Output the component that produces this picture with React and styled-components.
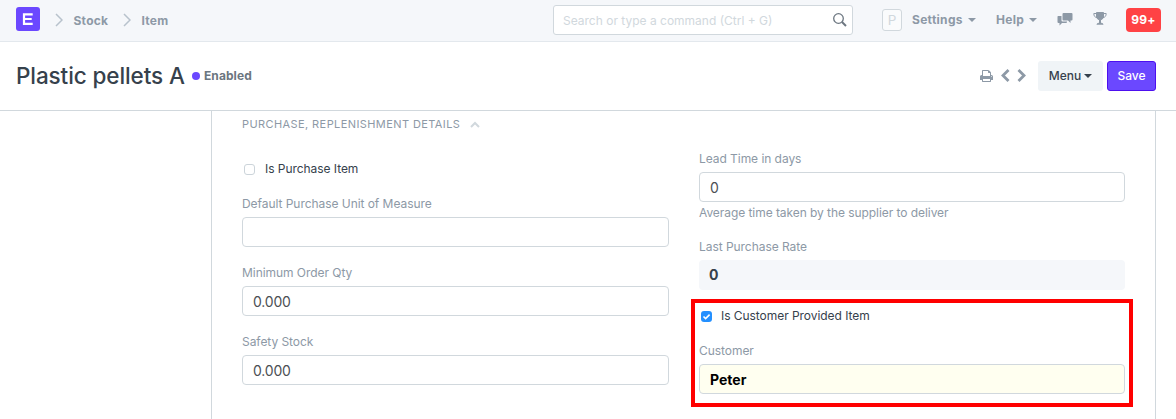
import React from 'react';
import styled, { createGlobalStyle, css } from 'styled-components';

const Global = createGlobalStyle`
  * { box-sizing: border-box; }
  body { margin: 0; background: #fff; color: #36414c; font: 12px/17px Inter, "Open Sans", sans-serif; overflow: hidden; }
  input, button { font-family: inherit; margin: 0; }
  svg { display: block; flex: none; }
`;

const Navbar = styled.nav`
  height: 42px; display: flex; align-items: center; padding: 0 15px 1px 16px;
  background: #f5f7fa; border-bottom: 1px solid #e3e8ed; color: #8d99a6; font-weight: 700;
`;
const Logo = styled.div`
  width: 24px; height: 24px; border-radius: 3px; background: #6b48ff; margin-top: -3px;
`;
const Crumb = styled.div`
  display: flex; align-items: center; gap: 10px; margin-left: 15px;
`;
const CrumbText = styled.span`width: ${p => p.$w}px; padding-left: .5px; letter-spacing: .25px; white-space: nowrap;`;
const Search = styled.label`
  width: 300px; height: 30px; margin: -1px 29px 0 auto; padding: 0 5px 0 9px;
  display: flex; align-items: center; background: #fff; border: 1px solid #d1d8dd; border-radius: 3px;
`;
const SearchInput = styled.input`
  flex: 1; border: 0; outline: 0; padding: 1px 0 0; font-size: 12px; background: transparent;
  &::placeholder { color: #d1d8dd; opacity: 1; }
`;
const NavRight = styled.div`display: flex; align-items: center; width: 279px; margin-top: -1px;`;
const Avatar = styled.div`
  width: 20px; height: 22px; border: 1px solid #d1d8dd; border-radius: 3px; color: #d1d8dd;
  font-size: 13.5px; font-weight: 400; line-height: 21px; text-align: center; background: #fafbfc;
`;
const NavLink = styled.div`
  display: flex; align-items: center; justify-content: space-between; letter-spacing: .3px;
  width: ${p => p.$w}px; margin-left: ${p => p.$left}px; white-space: nowrap;
`;
const Caret = styled.i`
  border: 4px solid transparent; border-top-color: currentColor; border-bottom: 0;
`;
const NavIcon = styled.div`margin-left: ${p => p.$left}px; margin-top: -2px;`;
const Badge = styled.div`
  width: 35px; height: 24px; margin-left: auto; border-radius: 4px; background: #ff4245; color: #fff;
  font-weight: 700; line-height: 24px; letter-spacing: .3px; text-align: center;
`;

const PageHead = styled.header`
  height: 69px; display: flex; align-items: center; padding: 0 20px 0 16px; border-bottom: 1px solid #d1d8dd;
`;
const Title = styled.h1`
  margin: 0; font-size: 22.5px; line-height: 30px; font-weight: 500; letter-spacing: -.1px;
  width: 176px; white-space: nowrap;
`;
const Status = styled.div`
  display: flex; align-items: center; gap: 4px; color: #6c7680; font-weight: 700; letter-spacing: .08px;
  margin-top: -1px;
  &::before { content: ''; width: 8px; height: 8px; margin-top: 1px; border-radius: 50%; background: #6b48ff; }
`;
const Tools = styled.div`display: flex; align-items: center; margin-left: auto; color: #8d99a6;`;
const PrevNext = styled.div`display: flex; gap: 7px; margin: -1px 12px 0 8px;`;
const Button = styled.button`
  height: 30px; display: flex; align-items: center; justify-content: center; gap: 3px; padding: 0 0 1px;
  width: ${p => (p.$primary ? 49 : 65)}px; border-radius: 3px; font-size: 12px; font-weight: 500;
  ${p => p.$primary
    ? css`background: #6b48ff; border: 1px solid #4d0fef; color: #fff; margin-left: 4px;`
    : css`background: #f0f4f7; border: 0; color: #36414c;`}
`;

const FormPanel = styled.main`
  height: 308px; margin: 0 20px 0 211px; padding: 5px 30px 0;
  border: solid #d1d8dd; border-width: 0 1px;
`;
const SectionHead = styled.h2`
  margin: 0; display: flex; align-items: center; gap: 10px; color: #8d99a6;
  font-size: 11px; line-height: 17px; font-weight: 400; letter-spacing: .41px; text-transform: uppercase;
`;
const Columns = styled.div`display: grid; grid-template-columns: 427px 426px; column-gap: 30px;`;
const Column = styled.div`display: flex; flex-direction: column; padding-top: ${p => p.$top}px;`;
const Field = styled.div`display: flex; flex-direction: column; margin-bottom: ${p => p.$gap ?? 17}px;`;
const Label = styled.label`line-height: 17px; margin-bottom: 5px; color: #8d99a6; letter-spacing: -.05px;`;
const Input = styled.input`
  width: 100%; height: 30px; padding: 1px 10px 0; border: 1px solid #d1d8dd; border-radius: 4px; outline: 0;
  font-size: 14px; letter-spacing: ${p => (p.$link ? 0 : -.2)}px; color: ${p => (p.$link ? '#000' : '#4c5054')};
  background: ${p => (p.$link ? '#fffff0' : '#fff')}; font-weight: ${p => (p.$link ? 700 : 400)};
`;
const ReadOnly = styled.div`
  height: 30px; padding: 0 10px; border-radius: 4px; background: #f5f7fa;
  font-size: 14px; line-height: 30px; font-weight: 700;
`;
const Help = styled.p`margin: 2px 0 0; line-height: 17px; color: #8d99a6; letter-spacing: -.06px;`;
const CheckRow = styled.label`
  display: flex; align-items: center; height: 17px; gap: ${p => p.$space}px; margin-bottom: 17px;
  padding-left: 2px; letter-spacing: -.05px;
`;
const CheckText = styled.span`padding-bottom: 2px;`;
const Box = styled.span`
  width: 11px; height: 11px; border-radius: 3px; flex: none;
  ${p => p.$checked ? css`background: #2490ff;` : css`border: 1px solid #ccd4da;`}
`;
const Highlight = styled.section`
  height: 108px; margin: -8px -8px 0 -8px; padding: 5px 4px 0 4px; border: 4px solid #f00;
`;

const Chevron = ({ w, h, d, color = 'currentColor', sw = 2 }) => (
  <svg width={w} height={h} viewBox={`0 0 ${w} ${h}`} fill="none" stroke={color} strokeWidth={sw}><path d={d} /></svg>
);

function TextField({ label, value, help, gap, link }) {
  return (
    <Field $gap={gap}>
      <Label>{label}</Label>
      <Input defaultValue={value} $link={link} />
      {help && <Help>{help}</Help>}
    </Field>
  );
}

export default function App() {
  return (
    <>
      <Global />
      <Navbar>
        <Logo>
          <svg width="24" height="24" viewBox="0 0 24 24" fill="none" stroke="#fff" strokeWidth="2.200"><path d="M16.700 7.300H8V16.800H16.700M8 12H15.700" /></svg>
        </Logo>
        <Crumb>
          <Chevron w={8} h={14} d="M1 1L7 7L1 13" color="#b8c2cc" sw={1.5} />
          <CrumbText $w={35}>Stock</CrumbText>
        </Crumb>
        <Crumb>
          <Chevron w={8} h={14} d="M1 1L7 7L1 13" color="#b8c2cc" sw={1.5} />
          <CrumbText $w={28}>Item</CrumbText>
        </Crumb>
        <Search>
          <SearchInput placeholder="Search or type a command (Ctrl + G)" />
          <svg width="15" height="15" viewBox="0 0 15 15" fill="none" stroke="#6c7680"><circle cx="6.500" cy="6.500" r="4.800" strokeWidth="1.300" /><path d="M10 10L14 14" strokeWidth="2" /></svg>
        </Search>
        <NavRight>
          <Avatar>P</Avatar>
          <NavLink $w={64} $left={10}>Settings<Caret /></NavLink>
          <NavLink $w={41} $left={20}>Help<Caret /></NavLink>
          <NavIcon $left={20}>
            <svg width="16" height="14" viewBox="0 0 16 14" fill="currentColor"><path d="M6.500 1H14.500Q15.500 1 15.500 2V7.500Q15.500 8.500 14.500 8.500H13.500V11L11 8.500H6.500Q5.500 8.500 5.500 7.500V2Q5.500 1 6.500 1ZM1 4H4.500V8.500Q4.500 9.500 5.500 9.500H10V10Q10 11 9 11H5L2.500 13.500V11H1.500Q.5 11 .5 10V5Q.5 4 1 4Z" /></svg>
          </NavIcon>
          <NavIcon $left={20}>
            <svg width="14" height="13" viewBox="0 0 14 13" fill="none" stroke="currentColor"><path d="M3.500 .5H10.500V5Q10 7.500 7 8Q4 7.500 3.500 5Z" fill="currentColor" /><path d="M3.500 1.500H.8C.8 4 2 5.500 4 5.500M10.500 1.500H13.200C13.200 4 12 5.500 10 5.500" /><path d="M7 8V11.500" strokeWidth="2" /><path d="M3.800 12.300L5 11.300H9L10.200 12.300Z" fill="currentColor" strokeWidth=".8" /></svg>
          </NavIcon>
          <Badge>99+</Badge>
        </NavRight>
      </Navbar>

      <PageHead>
        <Title>Plastic pellets A</Title>
        <Status>Enabled</Status>
        <Tools>
          <svg width="13" height="12" viewBox="0 128 1664 1536" fill="currentColor"><path d="M384 1536h896v-256h-896v256zM384 896h896v-384h-160q-40 0-68-28t-28-68v-160h-640v640zM1536 960q0-26-19-45t-45-19-45 19-19 45 19 45 45 19 45-19 19-45zM1664 960v416q0 13-9.500 22.500t-22.500 9.500h-224v160q0 40-28 68t-68 28h-960q-40 0-68-28t-28-68v-160h-224q-13 0-22.500-9.500t-9.500-22.500v-416q0-79 56.500-135.500t135.500-56.500h64v-544q0-40 28-68t68-28h672q40 0 88 20t76 48l152 152q28 28 48 76t20 88v256h64q79 0 135.500 56.500t56.500 135.500z" /></svg>
          <PrevNext>
            <Chevron w={9} h={13} d="M7.500 1L2 6.500L7.500 12" sw={2.8} />
            <Chevron w={9} h={13} d="M1.500 1L7 6.500L1.500 12" sw={2.8} />
          </PrevNext>
          <Button>Menu<Caret /></Button>
          <Button $primary>Save</Button>
        </Tools>
      </PageHead>

      <FormPanel>
        <SectionHead>
          Purchase, Replenishment Details
          <Chevron w={10} h={7} d="M1 6L5 2L9 6" color="#d1d8dd" />
        </SectionHead>
        <Columns>
          <Column $top={28}>
            <CheckRow $space={10}><Box /><CheckText>Is Purchase Item</CheckText></CheckRow>
            <TextField label="Default Purchase Unit of Measure" />
            <TextField label="Minimum Order Qty" value="0.000" />
            <TextField label="Safety Stock" value="0.000" />
          </Column>
          <Column $top={17}>
            <TextField label="Lead Time in days" value="0" help="Average time taken by the supplier to deliver" />
            <Field>
              <Label>Last Purchase Rate</Label>
              <ReadOnly>0</ReadOnly>
            </Field>
            <Highlight>
              <CheckRow $space={9}>
                <Box $checked>
                  <svg width="11" height="11" viewBox="0 0 11 11" fill="none" stroke="#fff" strokeWidth="1.600"><path d="M2.500 5.500L4.600 7.600L8.600 3.600" /></svg>
                </Box>
                <CheckText>Is Customer Provided Item</CheckText>
              </CheckRow>
              <TextField label="Customer" value="Peter" link gap={0} />
            </Highlight>
          </Column>
        </Columns>
      </FormPanel>
    </>
  );
}
